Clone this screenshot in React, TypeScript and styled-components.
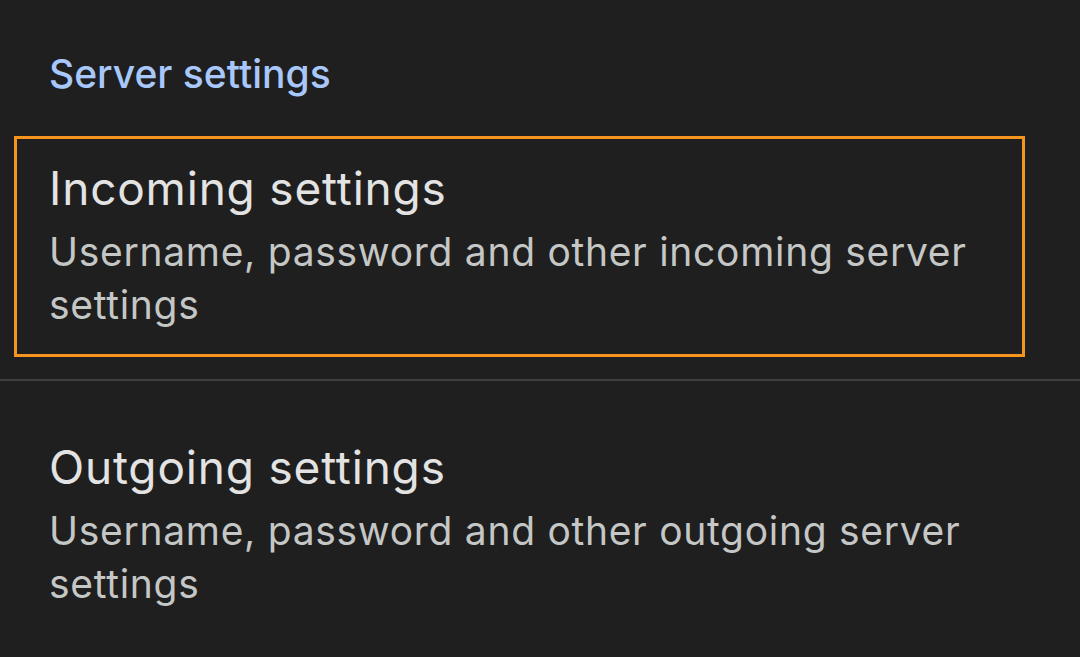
import styled, { createGlobalStyle } from 'styled-components';

const GlobalStyle = createGlobalStyle`
    html, body {
        margin: 0;
        padding: 0;
        background: #1f1f1f;
    }
    body {
        font-family: Inter, Roboto, "Liberation Sans", sans-serif;
        -webkit-font-smoothing: antialiased;
    }
`;

type Item = {
    title: string;
    summary: string;
    focused?: boolean;
};

const items: Item[] = [
    {
        title: 'Incoming settings',
        summary: 'Username, password and other incoming server settings',
        focused: true,
    },
    {
        title: 'Outgoing settings',
        summary: 'Username, password and other outgoing server settings',
    },
];

const SettingsScreen = () => (
    <>
        <GlobalStyle />
        <Page>
            <CategoryTitle>Server settings</CategoryTitle>
            {items.map((item, i) => (
                <Section key={item.title} $divider={i > 0}>
                    <PrefItem $focused={!!item.focused}>
                        <PrefTitle>{item.title}</PrefTitle>
                        <PrefSummary>{item.summary}</PrefSummary>
                    </PrefItem>
                </Section>
            ))}
        </Page>
    </>
);

export default SettingsScreen;

const Page = styled.div`
    width: 1080px;
    height: 657px;
    overflow: hidden;
    background: #1f1f1f;
`;

const CategoryTitle = styled.h2`
    margin: 0;
    padding: 50px 0 0 49px;
    height: 136px;
    box-sizing: border-box;
    font-size: 39px;
    font-weight: 500;
    line-height: 48px;
    color: #a8c7fa;
`;

const Section = styled.div<{ $divider: boolean }>`
    border-top: ${(p) => (p.$divider ? '2px solid #3f3f3f' : 'none')};
    padding: ${(p) => (p.$divider ? '34px 0 0' : '0 0 22px')};
`;

const PrefItem = styled.div<{ $focused: boolean }>`
    margin: 0 55px 0 14px;
    padding: 19px 32px 23px;
    border: 3px solid ${(p) => (p.$focused ? '#f7941d' : 'transparent')};
    display: flex;
    flex-direction: column;
`;

const PrefTitle = styled.div`
    font-size: 46px;
    line-height: 60px;
    letter-spacing: 0.8px;
    color: #e3e3e3;
`;

const PrefSummary = styled.div`
    margin-top: 7px;
    font-size: 39px;
    line-height: 53px;
    letter-spacing: 0.7px;
    color: #c4c7c5;
`;
